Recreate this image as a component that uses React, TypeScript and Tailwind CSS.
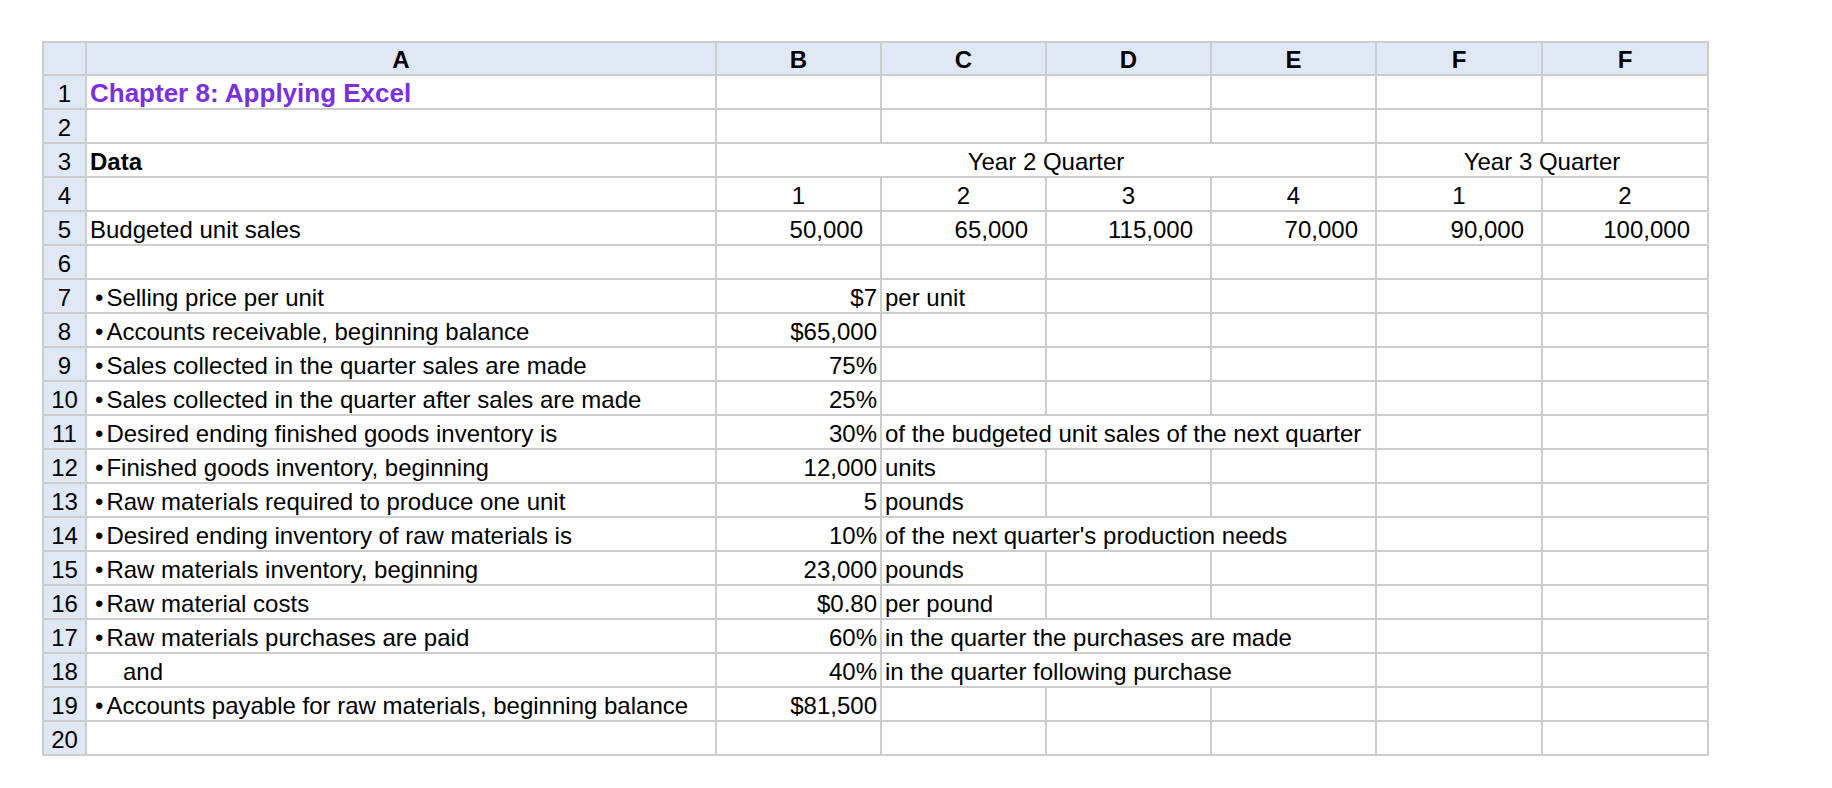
import React from 'react';

type Cell = {
  text?: string;
  span?: 1 | 2 | 3 | 4;
  align?: 'left' | 'center' | 'right' | 'num';
  bold?: boolean;
  bullet?: boolean;
  indent?: boolean;
  title?: boolean;
};

const spanClass = { 1: '', 2: 'col-span-2', 3: 'col-span-3', 4: 'col-span-4' };

const alignClass = {
  left: 'justify-start pl-[3px]',
  center: 'justify-center',
  right: 'justify-end pr-[3px]',
  num: 'justify-end pr-[17px]',
};

const blank = (n: number): Cell[] => Array.from({ length: n }, () => ({}));

// label in A, value in B, optional note in C (wide = overflows C:E)
const item = (label: string, value: string, note?: string, wide?: boolean, indent?: boolean): Cell[] => {
  const a: Cell = { text: label, bullet: !indent, indent };
  const b: Cell = { text: value, align: 'right' };
  if (!note) return [a, b, ...blank(5)];
  if (wide) return [a, b, { text: note, span: 3 }, ...blank(2)];
  return [a, b, { text: note }, ...blank(4)];
};

const rows: Cell[][] = [
  [{ text: 'Chapter 8: Applying Excel', title: true }, ...blank(6)],
  blank(7),
  [
    { text: 'Data', bold: true },
    { text: 'Year 2 Quarter', span: 4, align: 'center' },
    { text: 'Year 3 Quarter', span: 2, align: 'center' },
  ],
  [{}, ...['1', '2', '3', '4', '1', '2'].map((t) => ({ text: t, align: 'center' as const }))],
  [
    { text: 'Budgeted unit sales' },
    ...['50,000', '65,000', '115,000', '70,000', '90,000', '100,000'].map((t) => ({ text: t, align: 'num' as const })),
  ],
  blank(7),
  item('Selling price per unit', '$7', 'per unit'),
  item('Accounts receivable, beginning balance', '$65,000'),
  item('Sales collected in the quarter sales are made', '75%'),
  item('Sales collected in the quarter after sales are made', '25%'),
  item('Desired ending finished goods inventory is', '30%', 'of the budgeted unit sales of the next quarter', true),
  item('Finished goods inventory, beginning', '12,000', 'units'),
  item('Raw materials required to produce one unit', '5', 'pounds'),
  item('Desired ending inventory of raw materials is', '10%', "of the next quarter's production needs", true),
  item('Raw materials inventory, beginning', '23,000', 'pounds'),
  item('Raw material costs', '$0.80', 'per pound'),
  item('Raw materials purchases are paid', '60%', 'in the quarter the purchases are made', true),
  item('and', '40%', 'in the quarter following purchase', true, true),
  item('Accounts payable for raw materials, beginning balance', '$81,500'),
  blank(7),
];

const columns = ['A', 'B', 'C', 'D', 'E', 'F', 'F'];

const cellBase =
  'flex items-end overflow-hidden whitespace-nowrap border-r-2 border-b-2 border-[#cdcdcd] leading-[27px] pb-[1px]';

const SheetCell = ({ cell }: { cell: Cell }) => {
  const align = alignClass[cell.align ?? 'left'];
  const span = spanClass[cell.span ?? 1];
  return (
    <div className={`${cellBase} ${align} ${span}`}>
      {cell.title && <span className="text-[26px] font-bold text-[#7b30e0]">{cell.text}</span>}
      {cell.bullet && (
        <>
          <span className="ml-[5px]">•</span>
          <span className="ml-[3px]">{cell.text}</span>
        </>
      )}
      {cell.indent && <span className="ml-[33px]">{cell.text}</span>}
      {!cell.title && !cell.bullet && !cell.indent && cell.text && (
        <span className={cell.bold ? 'font-bold' : ''}>{cell.text}</span>
      )}
    </div>
  );
};

export default function App() {
  return (
    <div className="min-h-screen bg-white pl-[42px] pt-[41px] text-[24px] text-black font-['Liberation_Sans',Arial,sans-serif]">
      <div className="grid w-fit grid-cols-[43px_630px_165px_165px_165px_165px_166px_166px] grid-rows-[33px] auto-rows-[34px] border-l-2 border-t-2 border-[#cdcdcd]">
        {/* column letters */}
        <div className={`${cellBase} bg-[#e1e8f5]`} />
        {columns.map((c, i) => (
          <div key={i} className={`${cellBase} justify-center bg-[#e1e8f5] font-bold`}>
            {c}
          </div>
        ))}

        {rows.map((row, r) => (
          <React.Fragment key={r}>
            <div className={`${cellBase} justify-center bg-[#e1e8f5]`}>{r + 1}</div>
            {row.map((cell, c) => (
              <SheetCell key={c} cell={cell} />
            ))}
          </React.Fragment>
        ))}
      </div>
    </div>
  );
}
